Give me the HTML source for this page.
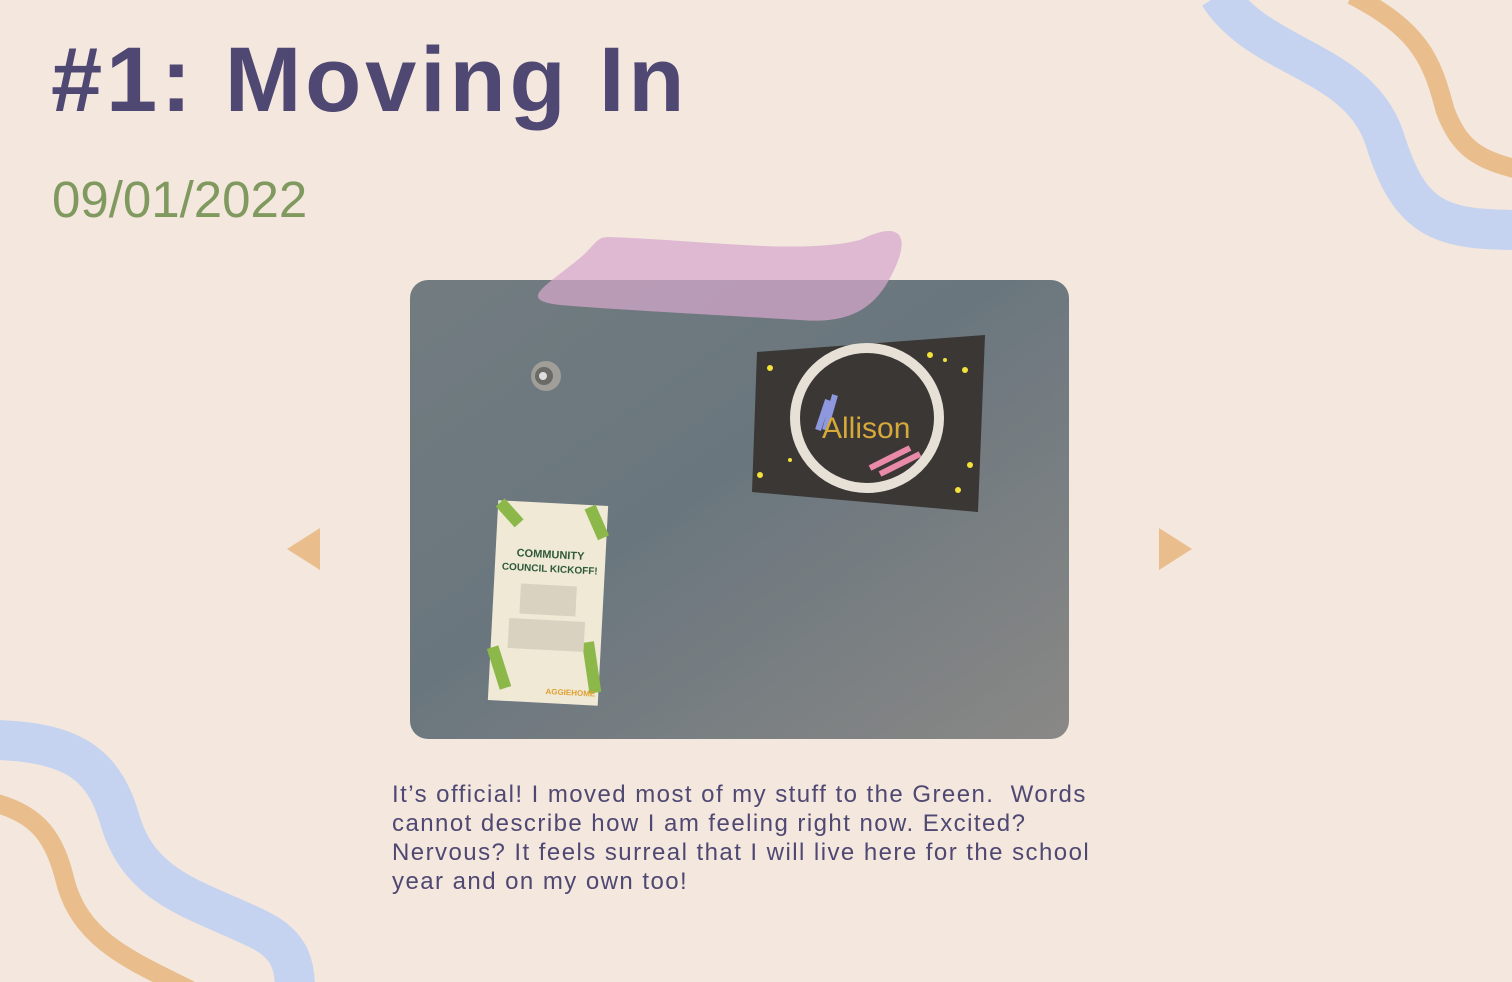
<!DOCTYPE html>
<html><head><meta charset="utf-8"><style>
html,body{margin:0;padding:0}
body{width:1512px;height:982px;background:#f3e7de;position:relative;overflow:hidden;font-family:"Liberation Sans",sans-serif}
h1{position:absolute;left:51px;top:28px;margin:0;font-size:92px;font-weight:bold;color:#4f4872;letter-spacing:3.8px;white-space:nowrap}
.date{position:absolute;left:52px;top:170px;font-size:51px;color:#80995f}
.txt{position:absolute;left:392px;top:780px;font-size:24px;line-height:29px;color:#4f4872;white-space:nowrap;letter-spacing:1.45px}
svg{position:absolute;left:0;top:0}
</style></head><body>
<svg width="1512" height="982" viewBox="0 0 1512 982">
<defs>
<linearGradient id="g" x1="0" y1="0" x2="1" y2="1">
<stop offset="0" stop-color="#727c80"/><stop offset="0.45" stop-color="#6a767e"/><stop offset="1" stop-color="#898886"/>
</linearGradient>
</defs>
<path d="M1219,-5 C1260,60 1360,60 1385,140 C1410,220 1440,230 1520,230" fill="none" stroke="#c5d3f0" stroke-width="40"/>
<path d="M1352,-5 C1420,30 1432,60 1445,110 C1460,150 1480,160 1520,170" fill="none" stroke="#e9be8c" stroke-width="19"/>
<path d="M-5,740 C80,742 105,770 120,820 C140,890 200,900 260,930 C290,945 295,965 295,990" fill="none" stroke="#c5d3f0" stroke-width="40"/>
<path d="M-5,803 C40,815 55,840 65,880 C80,940 130,960 190,990" fill="none" stroke="#e9be8c" stroke-width="19"/>
<rect x="410" y="280" width="659" height="459" rx="18" fill="url(#g)"/>
<circle cx="546" cy="376" r="15" fill="#a09e98"/><circle cx="544" cy="376" r="9" fill="#6a6a66"/><circle cx="543" cy="376" r="4" fill="#ddd"/>
<g transform="rotate(3 548 603)">
<rect x="493" y="503" width="110" height="200" fill="#efe9d6"/>
<path d="M495,505 l20,20 M585,505 l15,30 M495,650 l15,40 M590,640 l10,50" stroke="#8cb84a" stroke-width="12"/>
<text x="548" y="558" font-size="11" font-weight="bold" fill="#2f5a3a" text-anchor="middle">COMMUNITY</text>
<text x="548" y="572" font-size="10" font-weight="bold" fill="#2f5a3a" text-anchor="middle">COUNCIL KICKOFF!</text>
<rect x="520" y="585" width="56" height="30" fill="#d9d2c0"/>
<rect x="510" y="620" width="76" height="30" fill="#d9d2c0"/>
<text x="575" y="694" font-size="8" font-weight="bold" fill="#e0a030" text-anchor="middle">AGGIEHOME</text>
</g>
<path d="M757,352 L985,335 L978,512 L752,492 Z" fill="#3a3735"/>
<ellipse cx="867" cy="418" rx="72" ry="70" fill="none" stroke="#e6e0d6" stroke-width="10"/>
<path d="M828,400 l-10,30 M835,395 l-10,35" stroke="#8e98df" stroke-width="6"/>
<path d="M870,468 l40,-20 M880,474 l40,-20" stroke="#e98aa8" stroke-width="6"/>
<text x="822" y="438" font-size="30" fill="#d7a83a" font-family="Liberation Sans">Allison</text>
<g fill="#f2e23a"><circle cx="770" cy="368" r="3"/><circle cx="930" cy="355" r="3"/><circle cx="965" cy="370" r="3"/><circle cx="970" cy="465" r="3"/><circle cx="958" cy="490" r="3"/><circle cx="760" cy="475" r="3"/><circle cx="790" cy="460" r="2"/><circle cx="945" cy="360" r="2"/></g>
<path d="M608,237 C700,240 800,255 860,240 C900,220 910,235 895,268 C880,300 860,325 800,320 C720,315 620,310 560,305 C520,300 540,290 575,262 C595,247 595,237 608,237 Z" fill="#d5a8cc" fill-opacity="0.72"/>
<path d="M320,528 L320,570 L287,549 Z" fill="#e9be8c"/>
<path d="M1159,528 L1159,570 L1192,549 Z" fill="#e9be8c"/>
</svg>
<h1>#1: Moving In</h1>
<div class="date">09/01/2022</div>
<div class="txt">It’s official! I moved most of my stuff to the Green.&nbsp; Words<br>cannot describe how I am feeling right now. Excited?<br>Nervous? It feels surreal that I will live here for the school<br>year and on my own too!</div>
</body></html>
